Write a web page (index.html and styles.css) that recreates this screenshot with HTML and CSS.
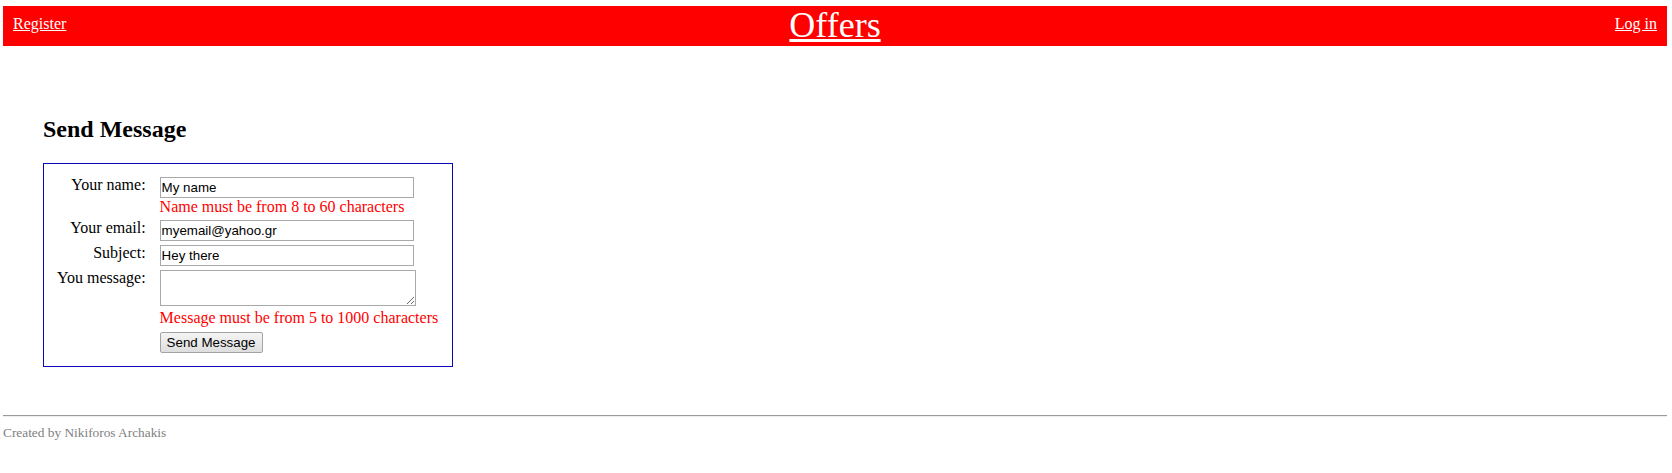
FILE: index.html
```html
<!DOCTYPE html>
<html lang="en">
<head>
<meta charset="utf-8">
<title>Send Message</title>
<link rel="stylesheet" href="styles.css">
</head>
<body>
<header class="topbar">
  <a class="side-link" href="#">Register</a>
  <a class="brand" href="#">Offers</a>
  <a class="side-link right" href="#">Log in</a>
</header>

<main class="content">
  <h2 class="page-title">Send Message</h2>
  <form class="form-box">
    <table class="form-table">
      <tr>
        <td class="label">Your name:</td>
        <td class="field">
          <input class="text-input" type="text" value="My name">
          <span class="error">Name must be from 8 to 60 characters</span>
        </td>
      </tr>
      <tr>
        <td class="label">Your email:</td>
        <td class="field"><input class="text-input" type="text" value="myemail@yahoo.gr"></td>
      </tr>
      <tr>
        <td class="label">Subject:</td>
        <td class="field"><input class="text-input" type="text" value="Hey there"></td>
      </tr>
      <tr>
        <td class="label">You message:</td>
        <td class="field">
          <textarea class="text-area"></textarea>
          <span class="error error-last">Message must be from 5 to 1000 characters</span>
        </td>
      </tr>
      <tr>
        <td class="label"></td>
        <td class="field"><button class="send-btn" type="button">Send Message</button></td>
      </tr>
    </table>
  </form>
</main>

<footer class="footer">
  <hr class="rule">
  <div class="credit">Created by Nikiforos Archakis</div>
</footer>
</body>
</html>
```
FILE: styles.css
```css
html, body {
  background: #ffffff;
}

body {
  margin: 6px 5px 0 3px;
  font-family: "Liberation Serif", "Times New Roman", serif;
  font-size: 16px;
  color: #000000;
}

/* Header bar */
.topbar {
  display: grid;
  grid-template-columns: 1fr auto 1fr;
  align-items: start;
  height: 40px;
  padding: 0 10px;
  background: #ff0000;
}

.side-link {
  justify-self: start;
  padding-top: 9px;
  line-height: 18px;
  color: #ffffff;
  text-decoration: underline;
}

.side-link.right {
  justify-self: end;
}

.brand {
  font-size: 36px;
  line-height: 38px;
  color: #ffffff;
  text-decoration: underline;
}

/* Main content */
.content {
  padding: 69px 0 40px 40px;
}

.page-title {
  margin: 0 0 20px;
  font-size: 24px;
  line-height: 28px;
  font-weight: bold;
}

.form-box {
  width: max-content;
  margin: 0;
  padding: 10px 11px 10px 10px;
  border: 1px solid #0a0ab4;
}

.form-table {
  border-collapse: separate;
  border-spacing: 2px;
}

.form-table td {
  padding: 1px;
  vertical-align: top;
}

.form-table td.label {
  padding-right: 11px;
  text-align: right;
  line-height: 16px;
  white-space: nowrap;
}

.text-input {
  display: block;
  box-sizing: border-box;
  width: 254px;
  height: 21px;
  margin: 0;
  padding: 1px 1px;
  border: 1px solid #a9a9a9;
  font-family: "Liberation Sans", Arial, sans-serif;
  font-size: 13.33px;
  color: #000000;
  background: #ffffff;
}

.text-area {
  display: block;
  box-sizing: border-box;
  width: 256px;
  height: 36px;
  margin: 0 0 3px;
  padding: 2px;
  border: 1px solid #a9a9a9;
  font-family: "Liberation Mono", monospace;
  font-size: 13.33px;
}

.error {
  display: block;
  line-height: 18px;
  color: #ff0000;
  white-space: nowrap;
}

.error-last {
  padding-bottom: 1px;
}

.send-btn {
  box-sizing: border-box;
  height: 21px;
  margin: 0;
  padding: 1px 6px;
  border: 1px solid #a3a3a3;
  border-radius: 2px;
  background: linear-gradient(#f4f4f4, #dedede);
  font-family: "Liberation Sans", Arial, sans-serif;
  font-size: 13.33px;
  color: #000000;
}

/* Footer */
.rule {
  height: 0;
  margin: 8px 0;
  border: 0;
  border-top: 1px solid #9a9a9a;
  border-bottom: 1px solid #eeeeee;
}

.credit {
  font-size: 13.33px;
  line-height: 15px;
  color: #808080;
}
```
